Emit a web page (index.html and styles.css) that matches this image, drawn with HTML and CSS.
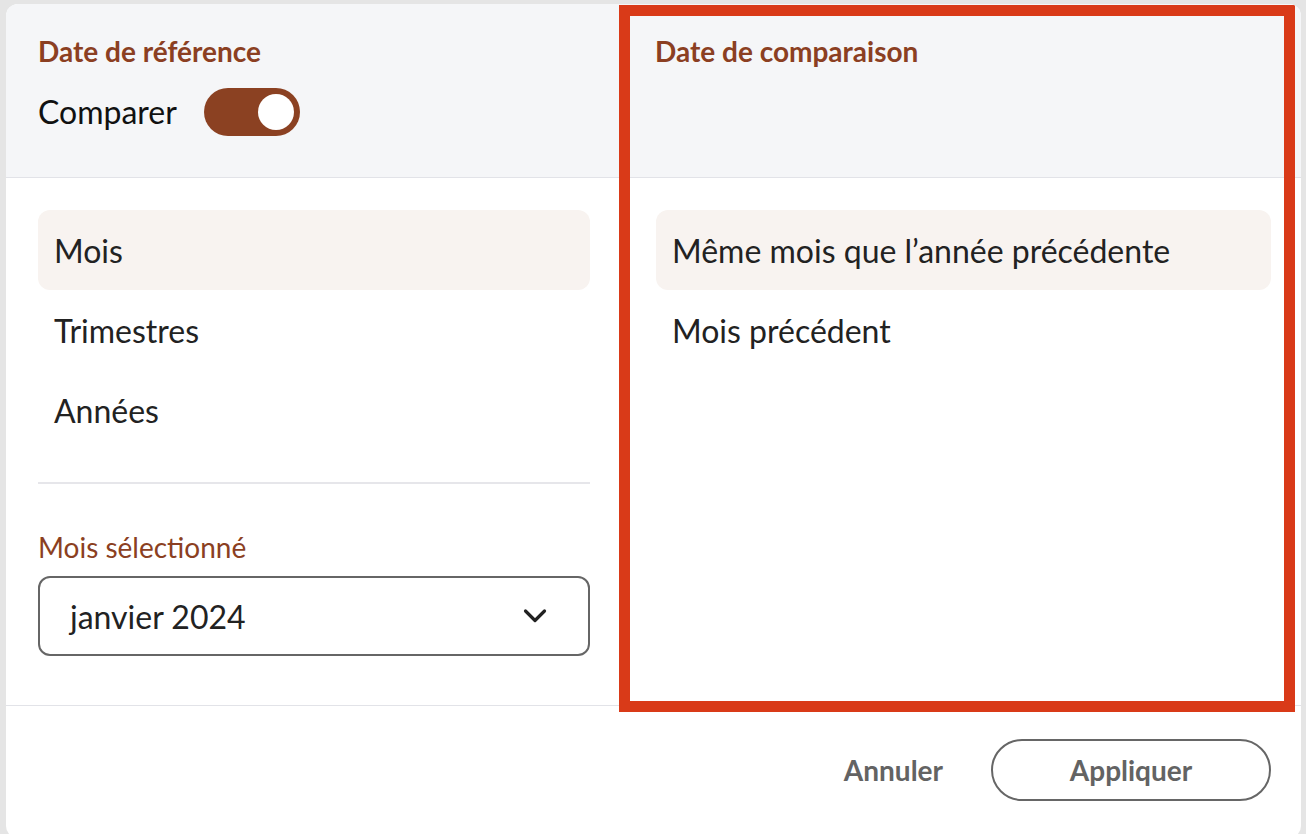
FILE: index.html
```html
<!DOCTYPE html>
<html lang="fr">
<head>
<meta charset="utf-8">
<title>Comparer les dates</title>
<link rel="stylesheet" href="styles.css">
</head>
<body>
<div class="backdrop">
  <div class="dialog">
    <div class="head head-left">
      <h2 class="title">Date de référence</h2>
      <div class="compare-row">
        <span class="compare-label">Comparer</span>
        <span class="toggle"><span class="knob"></span></span>
      </div>
    </div>
    <div class="head head-right">
      <h2 class="title">Date de comparaison</h2>
    </div>
    <div class="body body-left">
      <ul class="options">
        <li class="option selected">Mois</li>
        <li class="option">Trimestres</li>
        <li class="option">Années</li>
      </ul>
      <div class="divider"></div>
      <label class="field-label">Mois sélectionné</label>
      <div class="select">
        <span class="select-value">janvier 2024</span>
        <svg class="chevron" width="24" height="16" viewBox="0 0 24 16"><path d="M2.5 3 L12 12.5 L21.5 3" fill="none" stroke="#222" stroke-width="3.2" stroke-linecap="round" stroke-linejoin="round"/></svg>
      </div>
    </div>
    <div class="body body-right">
      <ul class="options">
        <li class="option selected">Même mois que l’année précédente</li>
        <li class="option">Mois précédent</li>
      </ul>
    </div>
    <div class="footer">
      <button class="btn-text">Annuler</button>
      <button class="btn-outline">Appliquer</button>
    </div>
    <div class="annotation"></div>
  </div>
</div>
</body>
</html>
```

FILE: styles.css
```css
* { box-sizing: border-box; }

html, body {
  margin: 0;
  height: 100%;
}

body {
  background: #e5e5e5;
  font-family: Lato, "Open Sans", "Liberation Sans", sans-serif;
  color: #222;
  overflow: hidden;
}

.backdrop {
  padding: 4px 5px 0 6px;
  height: 834px;
}

.dialog {
  position: relative;
  background: #fff;
  height: 834px;
  border-radius: 12px;
  overflow: hidden;
  display: grid;
  grid-template-columns: 616px 1fr;
  grid-template-rows: 174px 527px 1fr;
}

.head {
  background: #f5f6f8;
  border-bottom: 1px solid #e2e3e8;
  padding: 30px 32px 0 32px;
}

.head-right {
  padding-left: 33px;
}

.title {
  margin: 0;
  font-size: 28px;
  line-height: 34px;
  font-weight: 700;
  color: #8b3f22;
}

.compare-row {
  margin-top: 20px;
  display: flex;
  align-items: center;
  gap: 27px;
}

.compare-label {
  font-size: 32px;
  line-height: 40px;
  color: #111;
}

.toggle {
  width: 96px;
  height: 48px;
  border-radius: 24px;
  background: #8b4122;
  display: flex;
  align-items: center;
  justify-content: flex-end;
  padding-right: 6px;
}

.knob {
  width: 36px;
  height: 36px;
  border-radius: 50%;
  background: #fff;
}

.body {
  padding-top: 32px;
}

.body-left {
  padding-left: 32px;
  padding-right: 32px;
}

.body-right {
  padding-left: 34px;
  padding-right: 30px;
}

.options {
  list-style: none;
  margin: 0;
  padding: 0;
}

.option {
  height: 80px;
  display: flex;
  align-items: center;
  padding-left: 16px;
  border-radius: 12px;
  font-size: 32px;
  color: #222;
}

.option.selected {
  background: #f8f3f0;
}

.divider {
  height: 2px;
  background: #e6e6ea;
  margin-top: 32px;
}

.field-label {
  display: block;
  margin-top: 46px;
  font-size: 28px;
  line-height: 34px;
  color: #8b3f22;
}

.select {
  margin-top: 12px;
  height: 80px;
  border: 2px solid #666;
  border-radius: 12px;
  display: flex;
  align-items: center;
  justify-content: space-between;
  padding: 0 41px 0 30px;
}

.select-value {
  font-size: 32px;
  color: #222;
}

.chevron {
  display: block;
}

.footer {
  grid-column: 1 / -1;
  border-top: 1px solid #e2e3e8;
  display: flex;
  justify-content: flex-end;
  align-items: flex-start;
  gap: 48px;
  padding: 33px 30px 0 0;
}

.btn-text {
  border: 0;
  background: none;
  font-family: inherit;
  font-size: 28px;
  font-weight: 700;
  color: #636363;
  height: 62px;
  padding: 0;
  cursor: pointer;
}

.btn-outline {
  width: 280px;
  height: 62px;
  border: 2px solid #666;
  border-radius: 31px;
  background: #fff;
  font-family: inherit;
  font-size: 28px;
  font-weight: 700;
  color: #636363;
  cursor: pointer;
}

.annotation {
  position: absolute;
  left: 613px;
  top: 1px;
  width: 676px;
  height: 707px;
  border: 11px solid #d93a18;
  pointer-events: none;
}
```
